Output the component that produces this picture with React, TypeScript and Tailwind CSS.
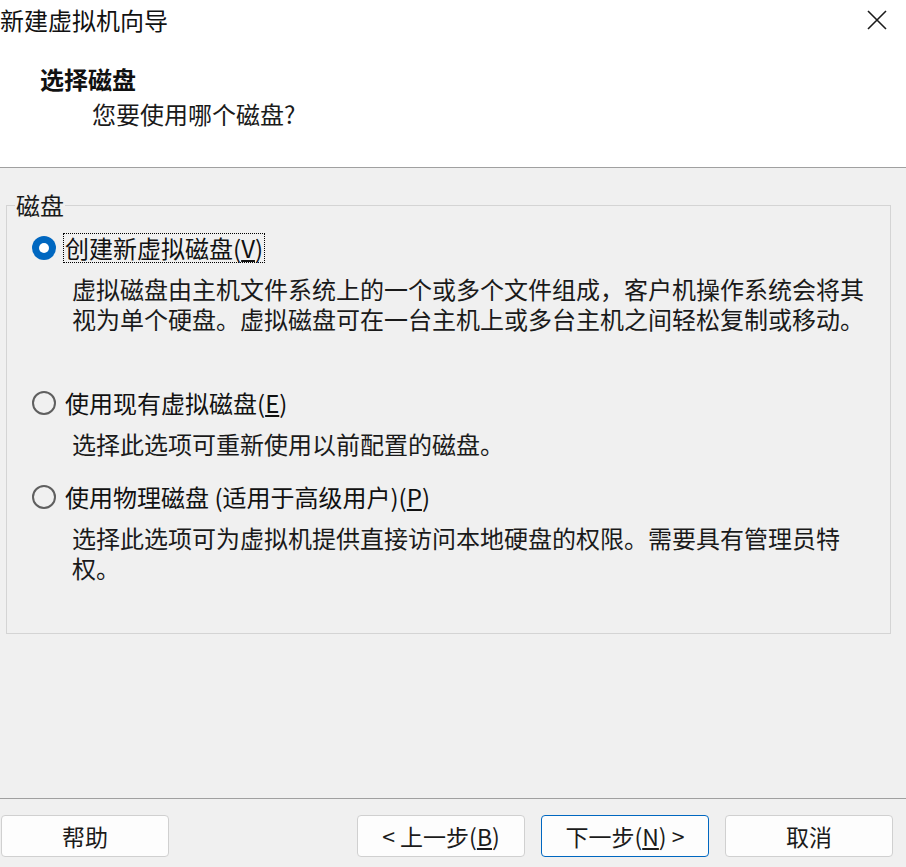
import React from 'react';

const font = { fontFamily: '"Noto Sans CJK SC", "Noto Sans", sans-serif' };

function Radio({ checked }: { checked?: boolean }) {
  if (checked) {
    return (
      <span className="flex h-[24px] w-[24px] shrink-0 items-center justify-center rounded-full bg-[#0067c0]">
        <span className="h-[10px] w-[10px] rounded-full bg-white" />
      </span>
    );
  }
  return <span className="h-[24px] w-[24px] shrink-0 rounded-full border-2 border-[#5f5f5f]" />;
}

function Option({
  checked,
  label,
  focused,
  children,
}: {
  checked?: boolean;
  label: React.ReactNode;
  focused?: boolean;
  children: React.ReactNode;
}) {
  return (
    <div>
      <div className="flex h-[30px] items-center pl-[25px]">
        <Radio checked={checked} />
        <span
          className={
            'ml-[7px] px-[1px] leading-[28px] ' +
            (focused ? 'border border-dotted border-black' : 'border border-transparent')
          }
        >
          {label}
        </span>
      </div>
      <p className="mt-[11px] pl-[65px] text-[24px] leading-[30px] text-[#1a1a1a]">{children}</p>
    </div>
  );
}

function Button({ children, primary }: { children: React.ReactNode; primary?: boolean }) {
  return (
    <button
      className={
        'flex h-[42px] w-[168px] items-center justify-center rounded-[4px] bg-[#fdfdfd] text-[23px] text-[#1b1b1b] border ' +
        (primary ? 'border-[#0067c0]' : 'border-[#d0d0d0]')
      }
    >
      {children}
    </button>
  );
}

export default function App() {
  return (
    <div className="flex h-[867px] w-[906px] flex-col bg-[#f0f0f0] text-[#111]" style={font}>
      {/* Header */}
      <div className="h-[168px] shrink-0 border-b border-[#a0a0a0] bg-white">
        <div className="flex h-[40px] items-center justify-between">
          <span className="text-[24px] leading-[40px]">新建虚拟机向导</span>
          <svg className="mr-[19px] h-[20px] w-[20px]" viewBox="0 0 20 20" fill="none" stroke="#1b1b1b" strokeWidth="1.6">
            <path d="M1 1 L19 19 M19 1 L1 19" />
          </svg>
        </div>
        <div className="mt-[23px] pl-[40px] text-[24px] font-bold leading-[32px]">选择磁盘</div>
        <div className="mt-[3px] pl-[92px] text-[24px] leading-[32px] text-[#1a1a1a]">您要使用哪个磁盘?</div>
      </div>

      {/* Body */}
      <div className="flex-1 text-[24px]">
        <fieldset className="mt-[23px] ml-[6px] w-[885px] border border-[#d4d4d4] p-0 pb-[50px]">
          <legend className="ml-[8px] px-[1px] leading-[28px] text-[#1a1a1a]">磁盘</legend>
          <div className="mt-[14px]">
            <Option
              checked
              focused
              label={
                <>
                  创建新虚拟磁盘(<span className="underline">V</span>)
                </>
              }
            >
              虚拟磁盘由主机文件系统上的一个或多个文件组成，客户机操作系统会将其
              <br />
              视为单个硬盘。虚拟磁盘可在一台主机上或多台主机之间轻松复制或移动。
            </Option>
          </div>
          <div className="mt-[54px]">
            <Option
              label={
                <>
                  使用现有虚拟磁盘(<span className="underline">E</span>)
                </>
              }
            >
              选择此选项可重新使用以前配置的磁盘。
            </Option>
          </div>
          <div className="mt-[23px]">
            <Option
              label={
                <>
                  使用物理磁盘 (适用于高级用户)(<span className="underline">P</span>)
                </>
              }
            >
              选择此选项可为虚拟机提供直接访问本地硬盘的权限。需要具有管理员特
              <br />
              权。
            </Option>
          </div>
        </fieldset>
      </div>

      {/* Footer */}
      <div className="flex h-[69px] shrink-0 items-start border-t border-[#a0a0a0] pt-[16px] pl-[1px] pr-[13px]">
        <Button>帮助</Button>
        <div className="flex-1" />
        <div className="flex gap-[16px]">
          <Button>
            &lt; 上一步(<span className="underline">B</span>)
          </Button>
          <Button primary>
            下一步(<span className="underline">N</span>) &gt;
          </Button>
          <Button>取消</Button>
        </div>
      </div>
    </div>
  );
}
